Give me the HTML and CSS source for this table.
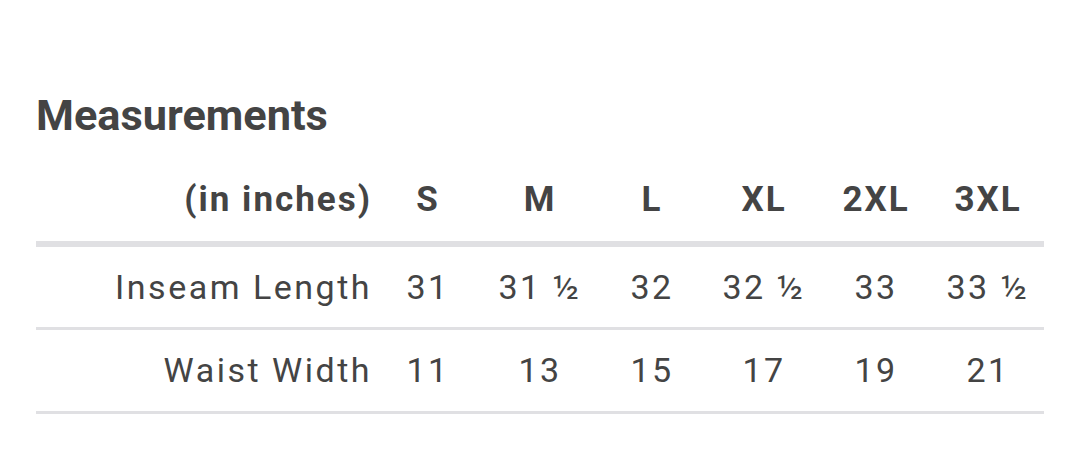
FILE: index.html
```html
<!DOCTYPE html>
<html lang="en">
<head>
<meta charset="utf-8">
<link rel="stylesheet" href="styles.css">
</head>
<body>
<section class="measure">
  <h2 class="title">Measurements</h2>
  <table class="chart">
    <thead>
      <tr>
        <th class="label">(in inches)</th>
        <th>S</th><th>M</th><th>L</th><th>XL</th><th>2XL</th><th>3XL</th>
      </tr>
    </thead>
    <tbody>
      <tr>
        <td class="label">Inseam Length</td>
        <td>31</td><td>31 ½</td><td>32</td><td>32 ½</td><td>33</td><td>33 ½</td>
      </tr>
      <tr>
        <td class="label">Waist Width</td>
        <td>11</td><td>13</td><td>15</td><td>17</td><td>19</td><td>21</td>
      </tr>
    </tbody>
  </table>
</section>
</body>
</html>
```
FILE: styles.css
```css
html, body {
  margin: 0;
  padding: 0;
  background: #ffffff;
}
body {
  font-family: Roboto, "Noto Sans", sans-serif;
  color: #444444;
}
.measure {
  padding: 88px 36px 0 36px;
}
.title {
  margin: 0;
  font-size: 43.3px;
  font-weight: 700;
  line-height: 56px;
}
.chart {
  width: 1008px;
  border-collapse: collapse;
  table-layout: fixed;
  margin-top: 22px;
}
.chart th,
.chart td {
  width: 112px;
  padding: 0;
  text-align: center;
  white-space: nowrap;
}
.chart .label {
  width: 336px;
  text-align: right;
}
.chart thead tr {
  height: 78px;
  border-bottom: 6px solid #e0e0e3;
}
.chart th {
  font-size: 35px;
  font-weight: 700;
  letter-spacing: 2px;
  vertical-align: middle;
  padding-bottom: 8px;
}
.chart tbody tr {
  height: 84px;
  border-bottom: 3px solid #e0e0e3;
}
.chart td {
  font-size: 34px;
  font-weight: 400;
  letter-spacing: 2.5px;
}
```
